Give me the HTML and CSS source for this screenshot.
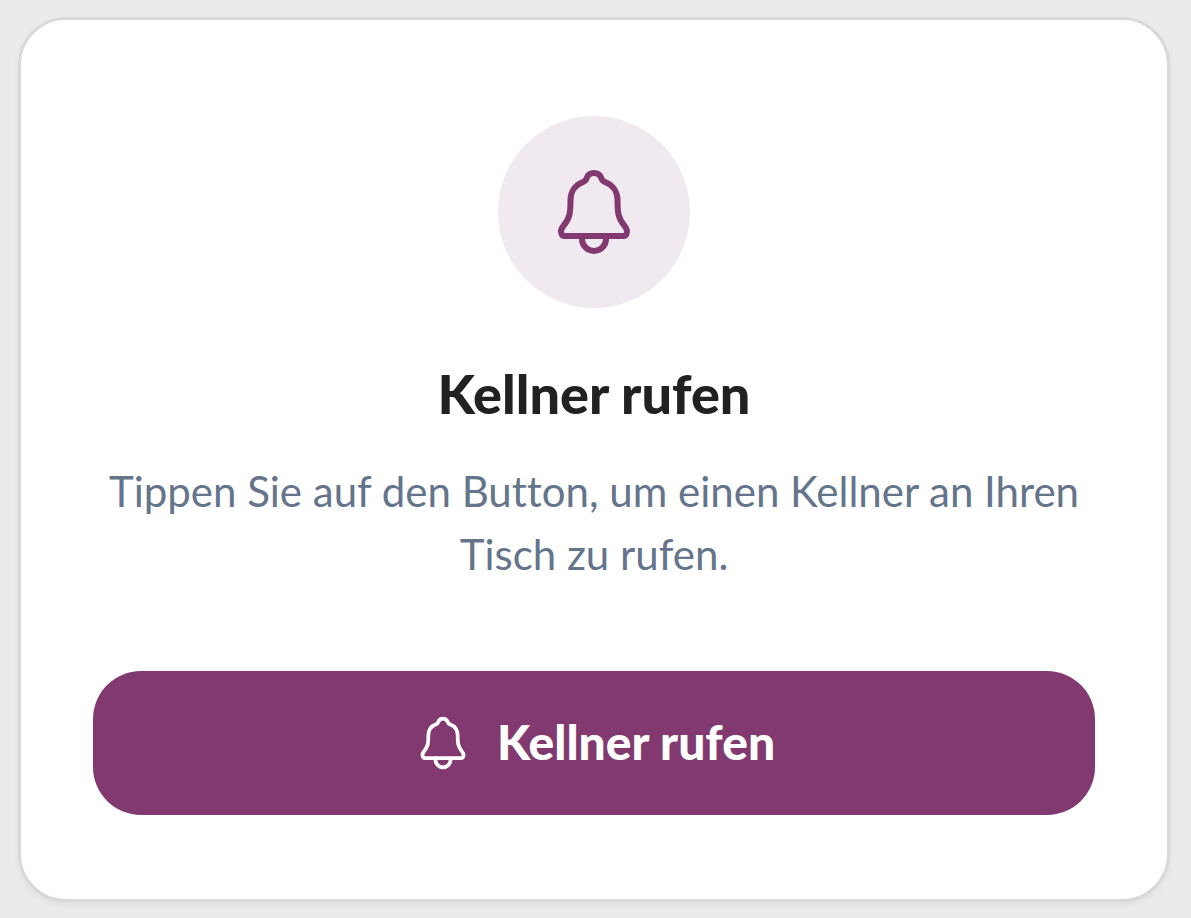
FILE: index.html
```
<!DOCTYPE html>
<html lang="de">
<head>
<meta charset="utf-8">
<meta name="viewport" content="width=device-width, initial-scale=1">
<title>Kellner rufen</title>
<link rel="stylesheet" href="styles.css">
</head>
<body>
<main class="card">
  <div class="badge">
    <svg class="badge-icon" viewBox="0 0 96 96" aria-hidden="true">
      <path d="M48 9C44.500 9 41.800 11 40.700 14C40 16.500 39.500 17 37 18C29 21 24.500 28 24.500 36C24.500 49 24 54 17 62.500C15 65 14.500 67 15.500 70Q16.200 72 18.500 72H77.500Q79.800 72 80.500 70C81.500 67 81 65 79 62.500C72 54 71.500 49 71.500 36C71.500 28 67 21 59 18C56.500 17 56 16.500 55.300 14C54.200 11 51.500 9 48 9Z"/>
      <path d="M36 72V75A12 12 0 0 0 60 75V72"/>
    </svg>
  </div>
  <h1 class="title">Kellner rufen</h1>
  <p class="text">Tippen Sie auf den Button, um einen Kellner an Ihren Tisch zu rufen.</p>
  <button class="call" type="button">
    <svg class="call-icon" viewBox="0 0 96 96" aria-hidden="true">
      <path d="M48 9C44.500 9 41.800 11 40.700 14C40 16.500 39.500 17 37 18C29 21 24.500 28 24.500 36C24.500 49 24 54 17 62.500C15 65 14.500 67 15.500 70Q16.200 72 18.500 72H77.500Q79.800 72 80.500 70C81.500 67 81 65 79 62.500C72 54 71.500 49 71.500 36C71.500 28 67 21 59 18C56.500 17 56 16.500 55.300 14C54.200 11 51.500 9 48 9Z"/>
      <path d="M36 72V75A12 12 0 0 0 60 75V72"/>
    </svg>
    <span class="call-label">Kellner rufen</span>
  </button>
</main>
</body>
</html>
```
FILE: styles.css
```
* { box-sizing: border-box; }
body {
  margin: 0;
  padding: 17px 21px 16px 18px;
  background: #ebebeb;
  font-family: Lato, "Noto Sans", sans-serif;
  font-variant-ligatures: none;
}
.card {
  display: flex;
  flex-direction: column;
  align-items: center;
  padding: 96px 72px 84px;
  border: 3px solid #d9d9d9;
  border-radius: 48px;
  background: #fff;
  box-shadow: 0 3px 6px rgba(0, 0, 0, 0.05);
}
.badge {
  display: grid;
  place-items: center;
  width: 192px;
  height: 192px;
  border-radius: 50%;
  background: #f0e9ef;
}
.badge-icon, .call-icon {
  fill: none;
  stroke: currentColor;
  stroke-width: 6;
  stroke-linecap: round;
  stroke-linejoin: round;
}
.badge-icon { width: 96px; height: 96px; color: #81396f; }
.title {
  margin: 48px 0 28px;
  color: #212121;
  font-size: 54px;
  line-height: 76px;
  font-weight: 900;
}
.text {
  margin: 0 0 85px;
  color: #64748b;
  font-size: 42px;
  line-height: 63px;
  text-align: center;
}
.call {
  display: flex;
  align-items: center;
  justify-content: center;
  gap: 24px;
  width: 100%;
  height: 144px;
  border: 0;
  border-radius: 48px;
  background: #81396f;
  color: #fff;
  font: inherit;
  font-size: 48px;
  font-weight: 900;
}
.call-icon { width: 60px; height: 60px; }
.call-label { padding-bottom: 4px; }
```
